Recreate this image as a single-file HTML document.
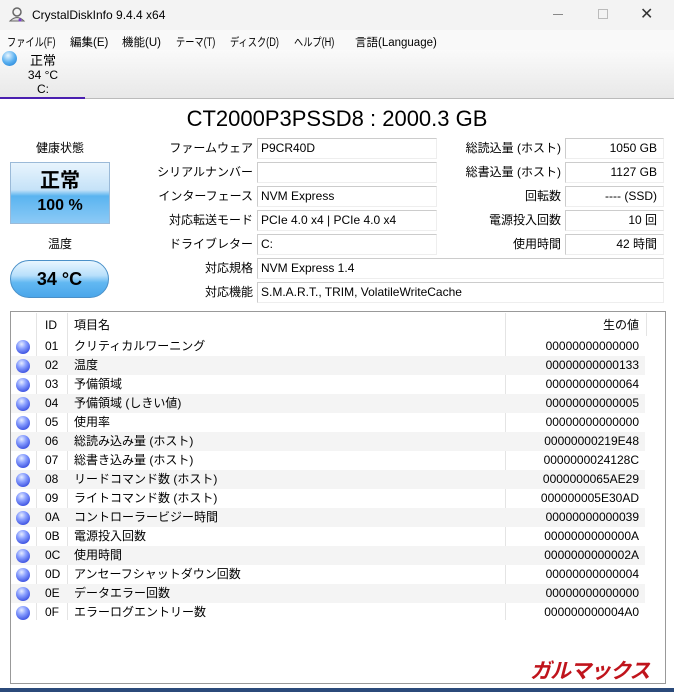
<!DOCTYPE html>
<html><head><meta charset="utf-8"><style>
*{margin:0;padding:0;box-sizing:border-box}
body{width:674px;height:692px;overflow:hidden;background:#fff;font-family:"Liberation Sans","Noto Sans CJK JP",sans-serif;font-size:12px;color:#000;position:relative}
.a{position:absolute}
.m{position:absolute;top:34px;font-size:11.5px;white-space:nowrap;transform-origin:left center}
.k{transform:scaleX(0.8)}
.lbl{position:absolute;text-align:right;font-size:12px;line-height:22px}
.fld{position:absolute;height:21px;border:1px solid #ccc;border-right-color:#eee;border-bottom-color:#eee;background:#fff;line-height:19px;padding:0 3px;font-size:12px}
.r{text-align:right}
.row{position:absolute;left:11px;width:634px;height:19px;line-height:19px;font-size:12px}
.row:nth-child(even){background:#f4f4f4}
.dot{position:absolute;left:5px;top:3px;width:14px;height:14px;border-radius:50%;background:radial-gradient(circle at 40% 30%,#e6ecff 0,#8aa0ff 35%,#3a4fe0 80%,#2a3ab0 100%)}
</style></head><body>
<div class="a" style="left:0;top:0;width:674px;height:30px;background:#f3f3f3"></div>
<svg class="a" style="left:8px;top:6px" width="18" height="18"><circle cx="9" cy="6" r="4" fill="none" stroke="#666" stroke-width="1.5"/><path d="M2 15 Q9 8 16 15 Z" fill="#ddd" stroke="#666"/><circle cx="12" cy="14" r="1.5" fill="#7a3bd0"/></svg>
<div class="a" style="left:32px;top:8px;font-size:12px">CrystalDiskInfo 9.4.4 x64</div>
<div class="a" style="left:553px;top:14px;width:10px;height:1px;background:#888"></div>
<div class="a" style="left:598px;top:9px;width:10px;height:10px;border:1px solid #bbb"></div>
<div class="a" style="left:640px;top:4px;font-size:16px;color:#333">✕</div>
<div class="a" style="left:0;top:30px;width:674px;height:20px;background:#f9f9f9"></div>
<span class="m k" style="left:7px">ファイル(F)</span><span class="m" style="left:70px">編集(E)</span><span class="m" style="left:122px">機能(U)</span><span class="m k" style="left:176px">テーマ(T)</span><span class="m k" style="left:230px">ディスク(D)</span><span class="m k" style="left:294px">ヘルプ(H)</span><span class="m" style="left:355px">言語(Language)</span>
<div class="a" style="left:0;top:50px;width:674px;height:49px;background:linear-gradient(#fafafa,#e8e8e8);border-bottom:1px solid #bbb"></div>
<div class="a" style="left:2px;top:51px;width:15px;height:15px;border-radius:50%;background:radial-gradient(circle at 40% 30%,#e8f6ff,#5ab0f0 50%,#1878d0)"></div>
<div class="a" style="left:26px;top:53px;width:34px;text-align:center;font-size:13px;line-height:15px">正常</div>
<div class="a" style="left:22px;top:68px;width:42px;text-align:center;font-size:12px;line-height:14px">34 °C</div>
<div class="a" style="left:22px;top:82px;width:42px;text-align:center;font-size:12px;line-height:14px">C:</div>
<div class="a" style="left:0;top:97px;width:85px;height:2px;background:#4a1fb0"></div>
<div class="a" style="left:0;top:104px;width:674px;text-align:center;font-size:22px;line-height:30px">CT2000P3PSSD8 : 2000.3 GB</div>
<div class="a" style="left:10px;top:138px;width:100px;text-align:center;font-size:12px;line-height:20px">健康状態</div>
<div class="a" style="left:10px;top:162px;width:100px;height:62px;border:1px solid #9bbad8;background:linear-gradient(#e8f4fd 0,#c5e2f8 45%,#5ab4f0 55%,#8ccaf6 100%);text-align:center;font-weight:bold">
<div style="font-size:20px;line-height:28px;margin-top:4px">正常</div><div style="font-size:16px;line-height:22px">100 %</div></div>
<div class="a" style="left:10px;top:235px;width:100px;text-align:center;line-height:18px">温度</div>
<div class="a" style="left:10px;top:260px;width:99px;height:38px;border-radius:19px;border:1px solid #4a90c8;background:linear-gradient(#e8f6ff 0,#b9e0fb 40%,#62b8f2 60%,#4aa6ea 100%);text-align:center;font-weight:bold;font-size:18px;line-height:36px">34 °C</div>
<div class="lbl" style="left:120px;top:137px;width:133px">ファームウェア</div>
<div class="lbl" style="left:120px;top:161px;width:133px">シリアルナンバー</div>
<div class="lbl" style="left:120px;top:185px;width:133px">インターフェース</div>
<div class="lbl" style="left:120px;top:209px;width:133px">対応転送モード</div>
<div class="lbl" style="left:120px;top:233px;width:133px">ドライブレター</div>
<div class="lbl" style="left:120px;top:257px;width:133px">対応規格</div>
<div class="lbl" style="left:120px;top:281px;width:133px">対応機能</div>
<div class="fld" style="left:257px;top:138px;width:180px">P9CR40D</div>
<div class="fld" style="left:257px;top:162px;width:180px"></div>
<div class="fld" style="left:257px;top:186px;width:180px">NVM Express</div>
<div class="fld" style="left:257px;top:210px;width:180px">PCIe 4.0 x4 | PCIe 4.0 x4</div>
<div class="fld" style="left:257px;top:234px;width:180px">C:</div>
<div class="fld" style="left:257px;top:258px;width:407px">NVM Express 1.4</div>
<div class="fld" style="left:257px;top:282px;width:407px">S.M.A.R.T., TRIM, VolatileWriteCache</div>
<div class="lbl" style="left:440px;top:137px;width:121px">総読込量 (ホスト)</div>
<div class="lbl" style="left:440px;top:161px;width:121px">総書込量 (ホスト)</div>
<div class="lbl" style="left:440px;top:185px;width:121px">回転数</div>
<div class="lbl" style="left:440px;top:209px;width:121px">電源投入回数</div>
<div class="lbl" style="left:440px;top:233px;width:121px">使用時間</div>
<div class="fld r" style="left:565px;top:138px;width:99px;padding-right:6px">1050 GB</div>
<div class="fld r" style="left:565px;top:162px;width:99px;padding-right:6px">1127 GB</div>
<div class="fld r" style="left:565px;top:186px;width:99px;padding-right:6px">---- (SSD)</div>
<div class="fld r" style="left:565px;top:210px;width:99px;padding-right:6px">10 回</div>
<div class="fld r" style="left:565px;top:234px;width:99px;padding-right:6px">42 時間</div>
<div class="a" style="left:10px;top:311px;width:656px;height:373px;border:1px solid #999;background:#fff"></div>
<div class="a" style="left:36px;top:313px;width:1px;height:307px;background:#e4e4e4"></div>
<div class="a" style="left:67px;top:313px;width:1px;height:307px;background:#e4e4e4"></div>
<div class="a" style="left:505px;top:313px;width:1px;height:307px;background:#e4e4e4"></div>
<div class="a" style="left:646px;top:313px;width:1px;height:23px;background:#e4e4e4"></div>
<div class="a" style="left:11px;top:314px;width:634px;height:22px;line-height:22px">
<span class="a" style="left:34px">ID</span><span class="a" style="left:63px">項目名</span><span class="a" style="right:6px">生の値</span></div>
<div class="a" style="left:0;top:337px">
<div class="row" style="top:0"><i class="dot"></i><span class="a" style="left:34px">01</span><span class="a" style="left:63px">クリティカルワーニング</span><span class="a" style="right:6px">00000000000000</span></div>
<div class="row" style="top:19px"><i class="dot"></i><span class="a" style="left:34px">02</span><span class="a" style="left:63px">温度</span><span class="a" style="right:6px">00000000000133</span></div>
<div class="row" style="top:38px"><i class="dot"></i><span class="a" style="left:34px">03</span><span class="a" style="left:63px">予備領域</span><span class="a" style="right:6px">00000000000064</span></div>
<div class="row" style="top:57px"><i class="dot"></i><span class="a" style="left:34px">04</span><span class="a" style="left:63px">予備領域 (しきい値)</span><span class="a" style="right:6px">00000000000005</span></div>
<div class="row" style="top:76px"><i class="dot"></i><span class="a" style="left:34px">05</span><span class="a" style="left:63px">使用率</span><span class="a" style="right:6px">00000000000000</span></div>
<div class="row" style="top:95px"><i class="dot"></i><span class="a" style="left:34px">06</span><span class="a" style="left:63px">総読み込み量 (ホスト)</span><span class="a" style="right:6px">00000000219E48</span></div>
<div class="row" style="top:114px"><i class="dot"></i><span class="a" style="left:34px">07</span><span class="a" style="left:63px">総書き込み量 (ホスト)</span><span class="a" style="right:6px">0000000024128C</span></div>
<div class="row" style="top:133px"><i class="dot"></i><span class="a" style="left:34px">08</span><span class="a" style="left:63px">リードコマンド数 (ホスト)</span><span class="a" style="right:6px">0000000065AE29</span></div>
<div class="row" style="top:152px"><i class="dot"></i><span class="a" style="left:34px">09</span><span class="a" style="left:63px">ライトコマンド数 (ホスト)</span><span class="a" style="right:6px">000000005E30AD</span></div>
<div class="row" style="top:171px"><i class="dot"></i><span class="a" style="left:34px">0A</span><span class="a" style="left:63px">コントローラービジー時間</span><span class="a" style="right:6px">00000000000039</span></div>
<div class="row" style="top:190px"><i class="dot"></i><span class="a" style="left:34px">0B</span><span class="a" style="left:63px">電源投入回数</span><span class="a" style="right:6px">0000000000000A</span></div>
<div class="row" style="top:209px"><i class="dot"></i><span class="a" style="left:34px">0C</span><span class="a" style="left:63px">使用時間</span><span class="a" style="right:6px">0000000000002A</span></div>
<div class="row" style="top:228px"><i class="dot"></i><span class="a" style="left:34px">0D</span><span class="a" style="left:63px">アンセーフシャットダウン回数</span><span class="a" style="right:6px">00000000000004</span></div>
<div class="row" style="top:247px"><i class="dot"></i><span class="a" style="left:34px">0E</span><span class="a" style="left:63px">データエラー回数</span><span class="a" style="right:6px">00000000000000</span></div>
<div class="row" style="top:266px"><i class="dot"></i><span class="a" style="left:34px">0F</span><span class="a" style="left:63px">エラーログエントリー数</span><span class="a" style="right:6px">000000000004A0</span></div>
</div>
<div class="a" style="left:530px;top:660px;font-size:21px;font-weight:bold;font-style:italic;color:#c0141c;letter-spacing:-1px;line-height:24px">ガルマックス</div>
<div class="a" style="left:0;top:688px;width:674px;height:4px;background:#2b4a7a"></div>
</body></html>
